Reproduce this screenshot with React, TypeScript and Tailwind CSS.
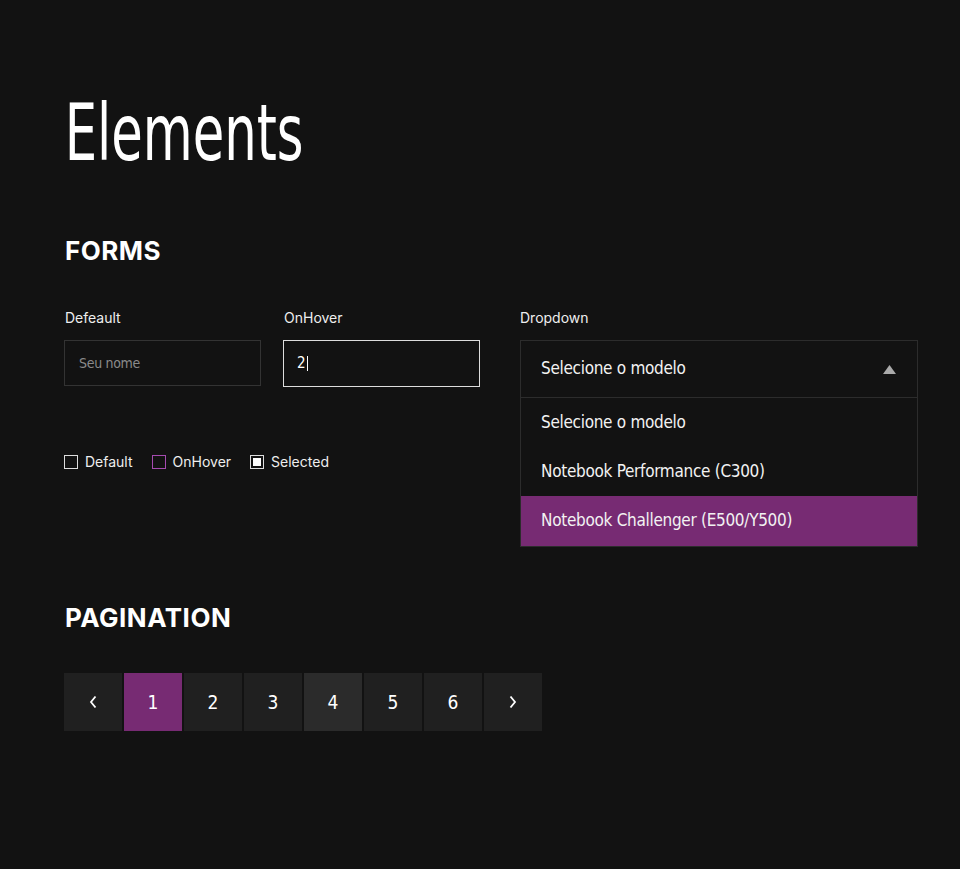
import React from 'react';

const narrow = `font-['DejaVu_Sans',sans-serif] font-stretch-condensed`;
const body = `font-['Inter','Noto_Sans',sans-serif]`;

const options = ['Selecione o modelo', 'Notebook Performance (C300)', 'Notebook Challenger (E500/Y500)'];

const Checkbox = ({ label, variant }: { label: string; variant: 'default' | 'hover' | 'selected' }) => (
  <label className={`flex items-center gap-[7px] text-[14px] text-[#eeeeee] ${body}`}>
    <span
      className={`w-[14px] h-[14px] border flex items-center justify-center ${
        variant === 'hover' ? 'border-[#a54bb0]' : 'border-[#dddddd]'
      }`}
    >
      {variant === 'selected' && <span className="w-[8px] h-[8px] bg-white" />}
    </span>
    {label}
  </label>
);

export default function App() {
  return (
    <div className={`min-h-screen bg-[#121212] text-white pl-[64px] pr-[42px] pt-[94px] pb-[130px] ${body}`}>
      <h1 className={`text-[78px] leading-none pl-[1px] origin-left scale-x-[0.73] ${narrow}`}>Elements</h1>

      <h2 className="mt-[59px] text-[26px] font-bold tracking-[0.5px] pl-[1px]">FORMS</h2>

      <div className="mt-[37px] flex items-start">
        <div className="w-[456px] shrink-0">
          <div className="flex gap-[22px]">
            <div>
              <div className="text-[14px] text-[#eeeeee] pl-[1px] h-[20px]">Defeault</div>
              <input
                className={`mt-[13px] w-[197px] h-[46px] bg-transparent border border-[#333333] px-[14px] text-[14px] tracking-[-0.3px] text-white placeholder:text-[#8a8a8a] outline-none ${narrow}`}
                placeholder="Seu nome"
              />
            </div>
            <div>
              <div className="text-[14px] text-[#eeeeee] pl-[1px] h-[20px]">OnHover</div>
              <div
                className={`mt-[13px] w-[197px] h-[47px] border border-[#dddddd] px-[13px] flex items-center text-[15px] text-white ${narrow}`}
              >
                2<span className="w-[1px] h-[15px] bg-white ml-[1px]" />
              </div>
            </div>
          </div>
          <div className="mt-[64px] flex items-center gap-[19px]">
            <Checkbox label="Default" variant="default" />
            <Checkbox label="OnHover" variant="hover" />
            <Checkbox label="Selected" variant="selected" />
          </div>
        </div>

        <div className="w-[398px] shrink-0">
          <div className="text-[14px] text-[#eeeeee] h-[20px]">Dropdown</div>
          <div className={`mt-[13px] ${narrow}`}>
            <div className="h-[58px] border border-[#2c2c2c] flex items-center justify-between pl-[20px] pr-[21px] text-[17px] tracking-[-0.3px] text-[#f2f2f2]">
              Selecione o modelo
              <svg width="13" height="9" viewBox="0 0 13 9">
                <path d="M6.5 0 L13 9 L0 9 Z" fill="#aaaaaa" />
              </svg>
            </div>
            <div className="border-x border-b border-[#2c2c2c]">
              {options.map((o, i) => (
                <div
                  key={o}
                  className={`h-[49px] flex items-center pl-[20px] text-[17px] tracking-[-0.3px] text-[#f2f2f2] ${
                    i === 2 ? 'bg-[#772b73] h-[50px]' : ''
                  }`}
                >
                  {o}
                </div>
              ))}
            </div>
          </div>
        </div>
      </div>

      <h2 className="mt-[51px] text-[26px] font-bold tracking-[0.5px] pl-[1px]">PAGINATION</h2>

      <div className={`mt-[36px] flex gap-[2px] ${narrow}`}>
        {['‹', '1', '2', '3', '4', '5', '6', '›'].map((p, i) => (
          <button
            key={i}
            className={`w-[58px] h-[58px] flex items-center justify-center text-[19px] text-white ${
              p === '1' ? 'bg-[#772b73]' : p === '4' ? 'bg-[#2b2b2b]' : 'bg-[#202020]'
            }`}
          >
            {p === '‹' ? (
              <svg width="10" height="16" viewBox="0 0 10 16">
                <path d="M7.5 2.5 L3 8 L7.5 13.5" stroke="white" strokeWidth="1.8" fill="none" />
              </svg>
            ) : p === '›' ? (
              <svg width="10" height="16" viewBox="0 0 10 16">
                <path d="M2.5 2.5 L7 8 L2.5 13.5" stroke="white" strokeWidth="1.8" fill="none" />
              </svg>
            ) : (
              p
            )}
          </button>
        ))}
      </div>
    </div>
  );
}
